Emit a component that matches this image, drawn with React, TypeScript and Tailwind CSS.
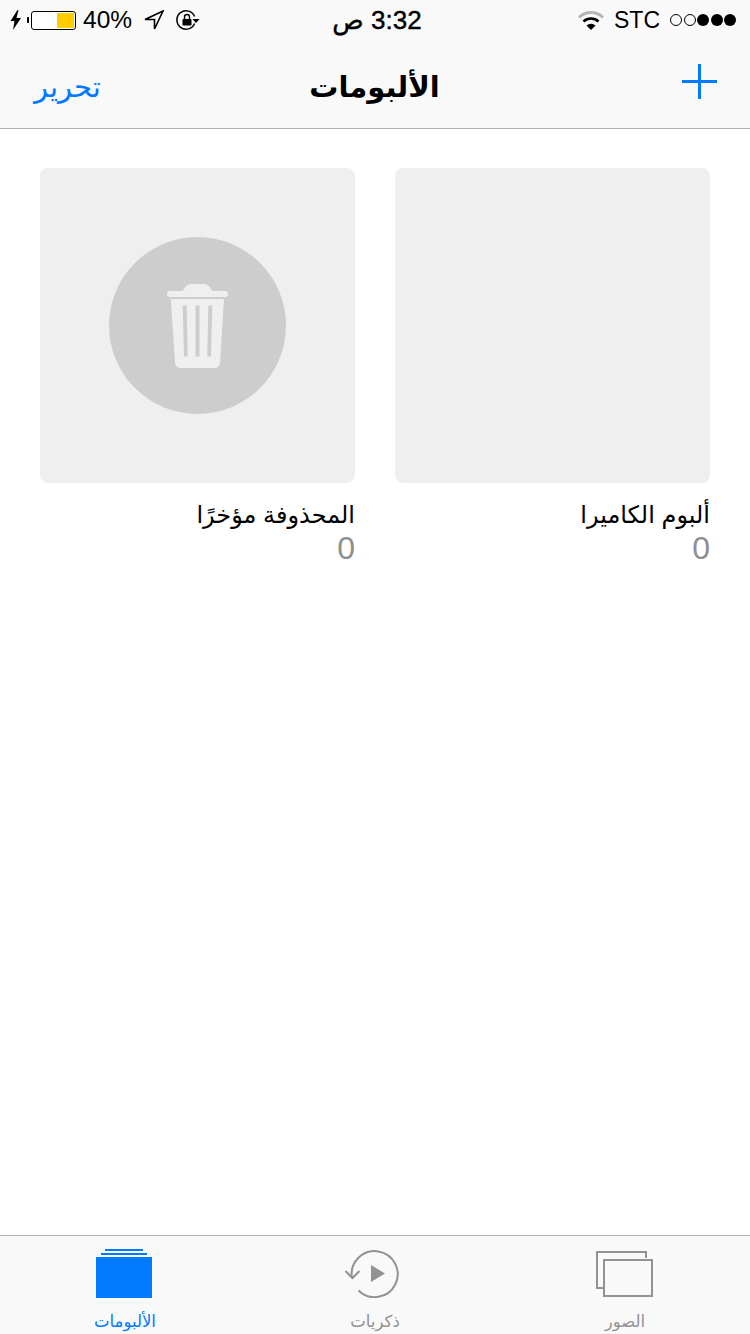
const SANS = 'font-["Liberation_Sans","DejaVu_Sans",sans-serif]';

function Bolt() {
  return (
    <svg width="12" height="20" viewBox="0 0 12 20" className="text-black">
      <path d="M7.5 0 L0.5 11 H4.5 L3 20 L11 8 H6.5 L8.5 0 Z" fill="currentColor" />
    </svg>
  );
}

function Battery() {
  return (
    <div className="flex items-center ml-[5px]">
      <div className="w-[2px] h-[6px] bg-black rounded-l-[1px] mr-[2px]" />
      <div className="w-[45px] h-[19px] border border-black rounded-[3px] flex justify-end p-[1px] bg-white">
        <div className="w-[17px] h-full bg-[#ffcc00]" />
      </div>
    </div>
  );
}

function LocationArrow() {
  return (
    <svg width="22" height="20" viewBox="0 0 22 20" fill="none" stroke="black" strokeWidth="1.6" strokeLinejoin="miter">
      <path d="M20 1 L2 9.5 H11.5 V19 Z" />
    </svg>
  );
}

function RotationLock() {
  return (
    <svg width="24" height="22" viewBox="0 0 24 22">
      <path d="M18.6 7.5 A9.2 9.2 0 1 0 18.6 14.5" fill="none" stroke="black" strokeWidth="1.5" />
      <path d="M16.4 10 H23.6 L20 14 Z" fill="black" />
      <rect x="6.5" y="10" width="9" height="6.5" rx="0.8" fill="black" />
      <path d="M8.5 10 V8 a2.5 2.5 0 0 1 5 0 V10" fill="none" stroke="black" strokeWidth="1.4" />
    </svg>
  );
}

function Wifi() {
  return (
    <svg width="26" height="19" viewBox="0 0 26 19">
      <path d="M1 6.5 A17 17 0 0 1 25 6.5" fill="none" stroke="#b5b5b5" strokeWidth="3" />
      <path d="M5.5 10.5 A11 11 0 0 1 20.5 10.5" fill="none" stroke="black" strokeWidth="2.6" />
      <path d="M8.5 14.5 A7 7 0 0 1 17.5 14.5 L13 19 Z" fill="black" />
    </svg>
  );
}

function Signal() {
  return (
    <div className="flex items-center gap-[1.5px] ml-[10px]">
      <span className="w-[12px] h-[12px] rounded-full border border-black" />
      <span className="w-[12px] h-[12px] rounded-full border border-black" />
      <span className="w-[12px] h-[12px] rounded-full bg-black" />
      <span className="w-[12px] h-[12px] rounded-full bg-black" />
      <span className="w-[12px] h-[12px] rounded-full bg-black" />
    </div>
  );
}

function StatusBar() {
  return (
    <div className="flex items-center h-[40px] pl-[10px] pr-[14px]">
      <div className="flex-1 flex items-center">
        <Bolt />
        <Battery />
        <span className="ml-[7px] text-[24.5px] leading-[40px] text-black">40%</span>
        <span className="ml-[11px]"><LocationArrow /></span>
        <span className="ml-[11px]"><RotationLock /></span>
      </div>
      <div dir="rtl" className="ml-[8px] text-[26px] leading-[40px] tracking-[1px] text-black whitespace-nowrap [-webkit-text-stroke:0.4px_black]">
        3:32 ص
      </div>
      <div className="flex-1 flex items-center justify-end">
        <Wifi />
        <span className="ml-[10px] text-[23px] leading-[40px] text-black">STC</span>
        <Signal />
      </div>
    </div>
  );
}

function NavBar() {
  return (
    <div className="flex items-center h-[89px] pl-[32px] pr-[33px] border-b border-[#b2b2b2]">
      <div className="flex-1 pt-[5px]">
        <span className="ml-[2px] text-[29px] leading-[40px] text-[#007aff]">تحرير</span>
      </div>
      <span className="pt-[5px] text-[29px] leading-[40px] font-bold text-black">الألبومات</span>
      <div className="flex-1 flex justify-end pb-[5px]">
        <svg width="35" height="35" viewBox="0 0 35 35">
          <path d="M17.5 0 V35 M0 17.5 H35" stroke="#007aff" strokeWidth="3" />
        </svg>
      </div>
    </div>
  );
}

function Trash() {
  return (
    <svg width="61" height="84" viewBox="0 0 61 84">
      <path
        d="M16 7 C17 4 20 0 24 0 H37 C41 0 44 4 45 7 H58.5 C60 7 61 8 61 10 C61 12 60 13 58.5 13 H2.5 C1 13 0 12 0 10 C0 8 1 7 2.5 7 Z"
        fill="#efefef"
      />
      <path
        fillRule="evenodd"
        d="M3.7 15 H57 L53 78 C52.8 82 50.5 84 47 84 H14 C10.5 84 8.2 82 8 78 Z M15.7 21.5 L17 72.5 H20.7 L19.7 21.5 Z M28.5 21.5 V72.5 H32.5 V21.5 Z M41.3 21.5 L40.3 72.5 H44 L45.3 21.5 Z"
        fill="#efefef"
      />
    </svg>
  );
}

function Album({ title, count, children }: { title: string; count: number; children?: React.ReactNode }) {
  return (
    <div>
      <div className="w-[315px] h-[315px] rounded-[8px] bg-[#efefef] flex items-center justify-center">
        {children}
      </div>
      <div className="mt-[15px] text-[24px] leading-[34px] text-black">{title}</div>
      <div className="text-[32px] leading-[32px] text-[#8e8e93]">{count}</div>
    </div>
  );
}

function PhotosIcon() {
  return (
    <svg width="58" height="46" viewBox="0 0 58 46" fill="none" stroke="#929292" strokeWidth="2" className="mb-[1px]">
      <path d="M50 7 V1 H1 V37 H7" />
      <rect x="8" y="9" width="48" height="36" />
    </svg>
  );
}

function MemoriesIcon() {
  return (
    <svg width="54" height="48" viewBox="0 0 54 48" fill="none" stroke="#929292" strokeWidth="2" className="mr-[6px]">
      <path d="M7 28 A23 23 0 1 1 13.5 40.5" />
      <path d="M0.5 21 L7.5 28 L14.5 21" />
      <path d="M26 15 L40 23.5 L26 32 Z" fill="#929292" stroke="none" />
    </svg>
  );
}

function AlbumsIcon() {
  return (
    <div className="flex flex-col items-center mr-[2px]">
      <div className="w-[38px] h-[2px] bg-[#007aff]" />
      <div className="w-[46px] h-[2px] bg-[#007aff] mt-[2px]" />
      <div className="w-[56px] h-[41px] bg-[#007aff] mt-[2px]" />
    </div>
  );
}

function TabItem({ label, active, children }: { label: string; active?: boolean; children: React.ReactNode }) {
  return (
    <div className="flex flex-col items-center w-[250px]">
      <div className="h-[50px] flex items-end justify-center">{children}</div>
      <span className={active ? "mt-[10px] text-[16.5px] leading-[26px] text-[#007aff]" : "mt-[10px] text-[16.5px] leading-[26px] text-[#929292]"}>
        {label}
      </span>
    </div>
  );
}

export default function App() {
  return (
    <div className={`${SANS} w-[750px] h-[1334px] flex flex-col bg-white overflow-hidden`}>
      <div className="bg-[#f9f9f9]">
        <StatusBar />
        <NavBar />
      </div>

      <div dir="rtl" className="flex-1 flex gap-[40px] px-[40px] pt-[39px]">
        <Album title="ألبوم الكاميرا" count={0} />
        <Album title="المحذوفة مؤخرًا" count={0}>
          <div className="w-[177px] h-[177px] rounded-full bg-[#cdcdcd] flex items-center justify-center">
            <Trash />
          </div>
        </Album>
      </div>

      <div className="h-[99px] border-t border-[#b2b2b2] bg-[#f9f9f9] flex pt-[12px]">
        <TabItem label="الألبومات" active><AlbumsIcon /></TabItem>
        <TabItem label="ذكريات"><MemoriesIcon /></TabItem>
        <TabItem label="الصور"><PhotosIcon /></TabItem>
      </div>
    </div>
  );
}
